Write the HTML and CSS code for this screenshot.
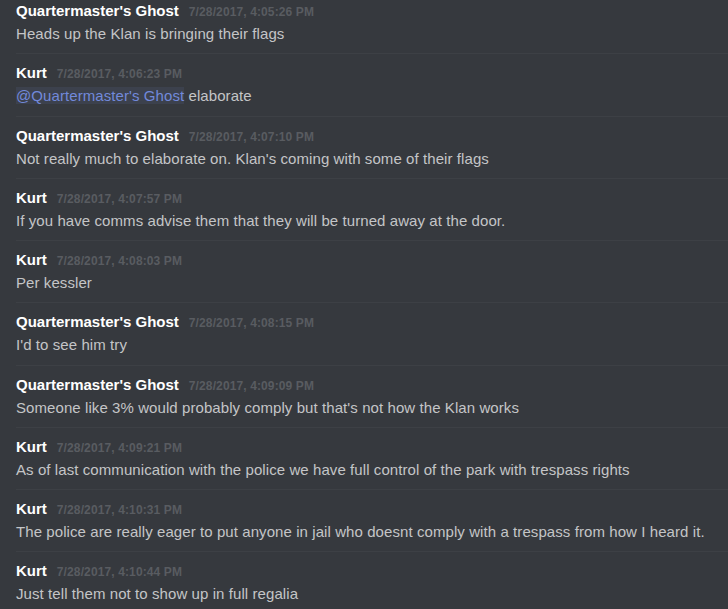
FILE: index.html
```html
<!DOCTYPE html>
<html>
<head>
<meta charset="utf-8">
<link rel="stylesheet" href="styles.css">
</head>
<body>
<div class="chat">
  <div class="msg first">
    <div class="head"><span class="name">Quartermaster's Ghost</span><span class="time">7/28/2017, 4:05:26 PM</span></div>
    <div class="text">Heads up the Klan is bringing their flags</div>
  </div>
  <div class="msg">
    <div class="head"><span class="name">Kurt</span><span class="time">7/28/2017, 4:06:23 PM</span></div>
    <div class="text"><span class="mention">@Quartermaster's Ghost</span> elaborate</div>
  </div>
  <div class="msg">
    <div class="head"><span class="name">Quartermaster's Ghost</span><span class="time">7/28/2017, 4:07:10 PM</span></div>
    <div class="text">Not really much to elaborate on. Klan's coming with some of their flags</div>
  </div>
  <div class="msg">
    <div class="head"><span class="name">Kurt</span><span class="time">7/28/2017, 4:07:57 PM</span></div>
    <div class="text">If you have comms advise them that they will be turned away at the door.</div>
  </div>
  <div class="msg">
    <div class="head"><span class="name">Kurt</span><span class="time">7/28/2017, 4:08:03 PM</span></div>
    <div class="text">Per kessler</div>
  </div>
  <div class="msg">
    <div class="head"><span class="name">Quartermaster's Ghost</span><span class="time">7/28/2017, 4:08:15 PM</span></div>
    <div class="text">I'd to see him try</div>
  </div>
  <div class="msg">
    <div class="head"><span class="name">Quartermaster's Ghost</span><span class="time">7/28/2017, 4:09:09 PM</span></div>
    <div class="text">Someone like 3% would probably comply but that's not how the Klan works</div>
  </div>
  <div class="msg">
    <div class="head"><span class="name">Kurt</span><span class="time">7/28/2017, 4:09:21 PM</span></div>
    <div class="text">As of last communication with the police we have full control of the park with trespass rights</div>
  </div>
  <div class="msg">
    <div class="head"><span class="name">Kurt</span><span class="time">7/28/2017, 4:10:31 PM</span></div>
    <div class="text">The police are really eager to put anyone in jail who doesnt comply with a trespass from how I heard it.</div>
  </div>
  <div class="msg">
    <div class="head"><span class="name">Kurt</span><span class="time">7/28/2017, 4:10:44 PM</span></div>
    <div class="text">Just tell them not to show up in full regalia</div>
  </div>
</div>
</body>
</html>
```
FILE: styles.css
```css
html, body {
  margin: 0;
  padding: 0;
  background: #36393e;
  height: 100%;
  overflow: hidden;
}
.chat {
  margin-top: -9px;
  font-family: "Liberation Sans", Arial, sans-serif;
}
.msg {
  margin-left: 16px;
  border-top: 1px solid #3d4045;
  height: 62.25px;
  box-sizing: border-box;
  padding-top: 9px;
}
.head {
  display: flex;
  align-items: baseline;
  height: 20px;
  line-height: 20px;
}
.name {
  font-size: 15px;
  font-weight: bold;
  color: #ffffff;
}
.time {
  font-size: 12px;
  font-weight: bold;
  letter-spacing: 0.12px;
  color: #595c61;
  margin-left: 10px;
}
.text {
  margin-top: 3px;
  font-size: 15px;
  letter-spacing: 0.08px;
  line-height: 20px;
  color: #c4c5c7;
  white-space: nowrap;
}
.mention {
  color: #7289da;
  background: rgba(114, 137, 218, 0.1);
}
```
